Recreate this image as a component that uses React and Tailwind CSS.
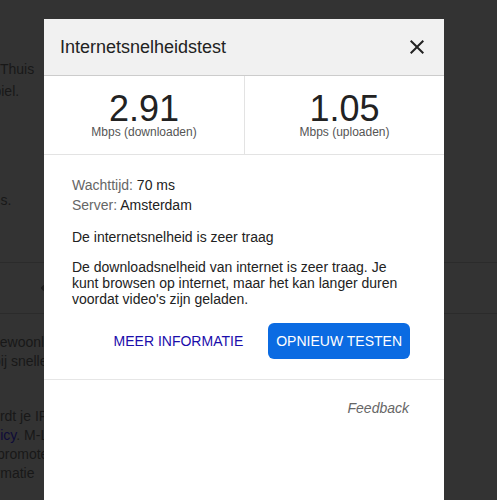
import { useState } from 'react'

// Page behind the dialog: only its right edge peeks out, dimmed by the overlay
function DimmedPage() {
  return (
    <div className="h-full overflow-hidden text-[14px] text-[#181818] whitespace-nowrap">
      <div className="pt-[58px] leading-[22px]">
        <div>Thuis</div>
        <div className="-ml-[26px]">mobiel.</div>
        <div className="mt-[87px] -ml-[26px]">soms.</div>
      </div>
      <div className="mt-[51px] h-[52px] border-y border-[#2b2b2b] flex items-center">
        <svg width="6" height="6" viewBox="0 0 6 6" className="ml-[41px]">
          <path d="M3 0.5 L0.5 3 L3 5.5 M0.5 3 H6" stroke="#1e1e1e" strokeWidth="1.5" fill="none" />
        </svg>
      </div>
      <div className="mt-[19px] leading-[19px]">
        <div className="-ml-[8px]">gewoonlijk is een snelheid van</div>
        <div className="-ml-[7px]">bij snellere verbindingen</div>
        <div className="mt-[36px] -ml-[18px]">wordt je IP-adres gedeeld</div>
        <div className="-ml-[20px]">
          <span className="text-[#0e0b38]">Policy</span>. M-Lab publiceert
        </div>
        <div className="-ml-[3px]">promoten van onderzoek</div>
        <div className="-ml-[27px]">informatie</div>
      </div>
    </div>
  )
}

function Stat({ value, label, first }) {
  return (
    <div className={`flex flex-col items-center pt-[17px] ${first ? '' : 'border-l border-[#e3e3e3]'}`}>
      <div className="text-[36px] leading-[32px] text-[#222]">{value}</div>
      <div className="text-[12px] leading-[14px] text-[#555]">{label}</div>
    </div>
  )
}

export default function App() {
  const [open, setOpen] = useState(true)

  return (
    <div className="relative w-[497px] h-[500px] overflow-hidden bg-[#333333] font-['Liberation_Sans',Arial,sans-serif]">
      <DimmedPage />

      {open && (
        <div className="absolute top-[19px] left-[44px] w-[400px] h-[481px] bg-white flex flex-col">
          <div className="h-[57px] shrink-0 bg-[#f1f1f1] border-b border-[#cccccc] flex items-center justify-between pl-4 pr-[15px]">
            <h2 className="text-[18px] text-[#222]">Internetsnelheidstest</h2>
            <button onClick={() => setOpen(false)} className="text-[#222]">
              <svg width="24" height="24" viewBox="0 0 24 24" fill="currentColor">
                <path d="M19 6.41L17.59 5 12 10.59 6.41 5 5 6.41 10.59 12 5 17.59 6.41 19 12 13.41 17.59 19 19 17.59 13.41 12z" />
              </svg>
            </button>
          </div>

          <div className="grid grid-cols-2 h-[79px] shrink-0 border-b border-[#e3e3e3]">
            <Stat value="2.91" label="Mbps (downloaden)" first />
            <Stat value="1.05" label="Mbps (uploaden)" />
          </div>

          <div className="pt-5 px-7 pb-5 text-[14px] text-[#222]">
            <div className="leading-5">
              <span className="text-[#666]">Wachttijd:</span> 70 ms
            </div>
            <div className="leading-5">
              <span className="text-[#666]">Server:</span> Amsterdam
            </div>
            <p className="mt-3 leading-5">De internetsnelheid is zeer traag</p>
            <p className="mt-3 leading-4">
              De downloadsnelheid van internet is zeer traag. Je kunt browsen op internet, maar het kan langer duren voordat video's zijn geladen.
            </p>
            <div className="mt-4 mr-[6px] flex justify-end items-center gap-[17px]">
              <button className="h-9 px-2 text-[#1a0dab] uppercase">Meer informatie</button>
              <button className="h-9 px-2 rounded-md bg-[#0b6be2] text-white uppercase">Opnieuw testen</button>
            </div>
          </div>

          <div className="border-t border-[#e6e6e6] pt-[18px] pr-[35px] text-right text-[14px] leading-5 italic text-[#666]">
            Feedback
          </div>
        </div>
      )}
    </div>
  )
}
